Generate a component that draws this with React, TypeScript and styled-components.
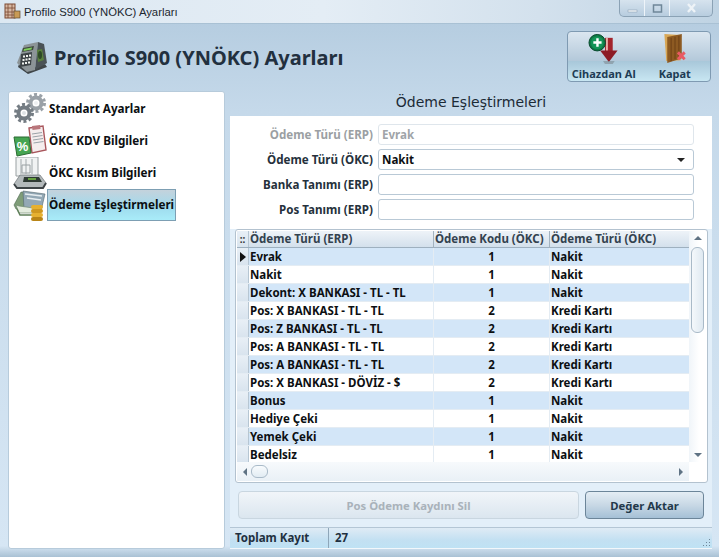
import React from "react";
import styled, { createGlobalStyle } from "styled-components";

const FONT = `"Noto Sans", "DejaVu Sans", sans-serif`;

const GlobalStyle = createGlobalStyle`
  html, body {
    margin: 0;
    padding: 0;
    width: 719px;
    height: 557px;
    overflow: hidden;
    background: #c8dcec;
    font-family: ${FONT};
  }
`;

const Window = styled.div`
  width: 719px;
  height: 557px;
  display: flex;
  flex-direction: column;
  overflow: hidden;
  background: linear-gradient(180deg, #b2cade 0%, #c5d9ea 20%, #d6e6f4 98%, #a9c1d4 100%);
`;
const TitleBar = styled.div`
  height: 24px;
  flex: none;
  display: flex;
  align-items: flex-start;
  padding-left: 4px;
  background: linear-gradient(90deg, #dce8f2 0%, #e4edf5 45%, #d3e1ed 75%, #bfd3e3 100%);
  border-bottom: 1px solid #a9c1d4;
  box-sizing: border-box;
`;
const TitleText = styled.span`
  margin: 4px 0 0 3px;
  font: 11.3px/16px "Liberation Sans", Arial, sans-serif;
  color: #1c2730;
  flex: 1;
`;
const WinControls = styled.div`
  display: flex;
  margin-right: 6px;
  height: 16px;
  border: 1px solid #8ba2b5;
  border-top: 0;
  border-radius: 0 0 5px 5px;
  background: linear-gradient(180deg, #d6e3ee, #b8cddf);
`;
const WinButton = styled.div<{ $w: number }>`
  width: ${(p) => p.$w}px;
  display: flex;
  align-items: center;
  justify-content: center;
  border-right: 1px solid #eef4f9;
  &:last-child { border-right: 0; }
`;
const Header = styled.div`
  height: 64px;
  flex: none;
  display: flex;
  align-items: flex-start;
  padding: 0 8px 0 15px;
`;
const HeaderIcon = styled.div`
  margin-top: 17px;
  height: 34px;
`;
const AppTitle = styled.h1`
  flex: 1;
  margin: 21px 0 0 5px;
  font: bold 20px/26px ${FONT};
  color: #22303f;
  white-space: nowrap;
`;
const Toolbar = styled.div`
  margin-top: 7px;
  width: 144px;
  height: 51px;
  display: flex;
  box-sizing: border-box;
  border: 1px solid #7f9ab2;
  border-radius: 4px;
  background: linear-gradient(180deg, #dbe6f0 0%, #b4c9da 58%, #a9c8da 60%, #c8e6f2 100%);
`;
const ToolButton = styled.div<{ $w: number }>`
  width: ${(p) => p.$w}px;
  display: flex;
  flex-direction: column;
  align-items: center;
  padding-top: 1px;
  font: bold 11px/14px ${FONT};
  color: #1e3d55;
  white-space: nowrap;
  & > span {
    margin-top: 3px;
  }
`;
const Body = styled.div`
  flex: 1;
  display: flex;
  gap: 5px;
  padding: 3px 7px 8px 8px;
  min-height: 0;
`;
const Sidebar = styled.div`
  width: 217px;
  flex: none;
  background: #fff;
  border-radius: 3px;
  border: 1px solid #b7cbdb;
  box-sizing: border-box;
  padding-top: 1px;
`;
const NavRow = styled.div`
  height: 32px;
  display: flex;
  align-items: center;
  padding-left: 4px;
`;
const NavIcon = styled.div`
  width: 34px;
  height: 32px;
  flex: none;
`;
const NavLabel = styled.div<{ $active?: boolean }>`
  height: 32px;
  box-sizing: border-box;
  width: 129px;
  padding-left: 1px;
  font: bold 11.7px/28px ${FONT};
  color: #0c0f12;
  white-space: nowrap;
  border: 1px solid ${(p) => (p.$active ? "#7d9fb3" : "transparent")};
  background: ${(p) => (p.$active ? "linear-gradient(180deg, #c4d2dc 0%, #9fdcee 60%, #a9ecf9 100%)" : "none")};
`;
const Content = styled.div`
  flex: 1;
  display: flex;
  flex-direction: column;
  min-width: 0;
`;
const SectionTitle = styled.div`
  height: 25px;
  flex: none;
  text-align: center;
  font: 14px/23px "DejaVu Sans", sans-serif;
  color: #1b2a36;
`;
const Panel = styled.div`
  flex: 1;
  display: flex;
  flex-direction: column;
  background: #e3eff9;
  min-height: 0;
`;
const Form = styled.div`
  background: #fff;
  padding: 8px 18px 9px 0;
  display: flex;
  flex-direction: column;
  gap: 4px;
`;
const FormRow = styled.div`
  display: flex;
  align-items: flex-start;
  height: 21px;
`;
const FieldLabel = styled.div<{ $off?: boolean }>`
  width: 143px;
  text-align: right;
  font: bold 11.6px/21px ${FONT};
  color: ${(p) => (p.$off ? "#9b9fa3" : "#25313c")};
  white-space: nowrap;
`;
const Field = styled.div<{ $off?: boolean }>`
  margin-left: 5px;
  flex: 1;
  height: 21px;
  box-sizing: border-box;
  padding: 0 8px 0 3px;
  display: flex;
  align-items: center;
  justify-content: space-between;
  background: #fff;
  border: 1px solid ${(p) => (p.$off ? "#dfe6ec" : "#b9c9d6")};
  border-radius: 3px;
  font: bold 11.6px/17px ${FONT};
  color: ${(p) => (p.$off ? "#a0a4a8" : "#0c0f12")};
`;
const Caret = styled.span`
  width: 0;
  height: 0;
  border-left: 4px solid transparent;
  border-right: 4px solid transparent;
  border-top: 4px solid #222;
`;
const GridBox = styled.div`
  margin: 0 4px 0 5px;
  height: 254px;
  flex: none;
  box-sizing: border-box;
  border: 1px solid #b3c2cf;
  border-radius: 3px;
  background: #fff;
  padding: 1px;
  display: grid;
  grid-template-columns: 1fr 17px;
  grid-template-rows: 1fr 19px;
`;
const GridMain = styled.div`
  overflow: hidden;
  min-width: 0;
`;
const GridRow = styled.div<{ $head?: boolean; $alt?: boolean }>`
  height: ${(p) => (p.$head ? "17px" : "18px")};
  display: grid;
  grid-template-columns: 12px 185px 116px 141px;
  box-sizing: border-box;
  background: ${(p) =>
    p.$head ? "linear-gradient(180deg, #eef3f8, #d3e0ec)" : p.$alt ? "#d3e6f8" : "#fff"};
  border-bottom: 1px solid ${(p) => (p.$head ? "#9eb0bf" : "#e4ecf3")};
`;
const RowHead = styled.div`
  display: flex;
  align-items: center;
  justify-content: center;
  box-sizing: border-box;
  background: linear-gradient(180deg, #e8eff6, #d9e4ee);
  border-right: 1px solid #b6c6d3;
  font: bold 10px/14px ${FONT};
  color: #333;
`;
const Cell = styled.div<{ $center?: boolean; $head?: boolean }>`
  padding-left: ${(p) => (p.$center ? "0" : "1px")};
  text-align: ${(p) => (p.$center ? "center" : "left")};
  font: bold 11.5px/${(p) => (p.$head ? "15px" : "18px")} ${FONT};
  color: ${(p) => (p.$head ? "#33424f" : "#0c0f12")};
  border-right: 1px solid ${(p) => (p.$head ? "#a3b3c0" : "#e4ecf3")};
  white-space: nowrap;
  overflow: hidden;
`;
const ArrowRight = styled.span`
  width: 0;
  height: 0;
  border-top: 5px solid transparent;
  border-bottom: 5px solid transparent;
  border-left: 6px solid #111;
`;
const VBar = styled.div`
  background: linear-gradient(90deg, #f0f5f9, #fff 60%);
  display: flex;
  flex-direction: column;
  align-items: center;
  padding: 5px 0 5px;
`;
const HBar = styled.div`
  background: linear-gradient(180deg, #f7fafc, #e9f0f6);
  display: flex;
  align-items: center;
  padding: 0 6px;
  justify-content: space-between;
`;
const Corner = styled.div`
  background: #fff;
`;
const Tri = styled.span<{ $dir: "up" | "down" | "left" | "right" }>`
  width: 0;
  height: 0;
  flex: none;
  ${(p) =>
    p.$dir === "up"
      ? "border-left:4px solid transparent;border-right:4px solid transparent;border-bottom:4px solid #5f7384;"
      : p.$dir === "down"
        ? "border-left:4px solid transparent;border-right:4px solid transparent;border-top:4px solid #5f7384;"
        : p.$dir === "left"
          ? "border-top:4px solid transparent;border-bottom:4px solid transparent;border-right:4px solid #5f7384;"
          : "border-top:4px solid transparent;border-bottom:4px solid transparent;border-left:4px solid #5f7384;"}
`;
const VThumb = styled.div`
  width: 13px;
  height: 86px;
  margin-top: 7px;
  box-sizing: border-box;
  border: 1px solid #a9bac8;
  border-radius: 6px;
  background: linear-gradient(90deg, #f4f8fb, #dfe9f1);
`;
const VTrack = styled.div`
  flex: 1;
`;
const HThumb = styled.div`
  width: 17px;
  height: 13px;
  margin-left: 4px;
  box-sizing: border-box;
  border: 1px solid #a9bac8;
  border-radius: 6px;
  background: linear-gradient(180deg, #f8fbfd, #e2ecf3);
`;
const HTrack = styled.div`
  flex: 1;
`;
const Actions = styled.div`
  display: flex;
  gap: 6px;
  padding: 8px;
  height: 44px;
  box-sizing: border-box;
  flex: none;
`;
const ActionButton = styled.div<{ $off?: boolean; $w: number }>`
  width: ${(p) => p.$w}px;
  height: 28px;
  box-sizing: border-box;
  border-radius: 4px;
  text-align: center;
  font: bold 11.3px/27px ${FONT};
  border: 1px solid ${(p) => (p.$off ? "#c9d6e0" : "#6c8599")};
  color: ${(p) => (p.$off ? "#a9b2ba" : "#22384a")};
  background: ${(p) =>
    p.$off
      ? "linear-gradient(180deg, #f1f5f9, #dbe6ef)"
      : "linear-gradient(180deg, #e4edf4 0%, #c8d8e5 50%, #a5c0d6 100%)"};
`;
const StatusBar = styled.div`
  height: 22px;
  flex: none;
  display: flex;
  position: relative;
  box-sizing: border-box;
  border-top: 1px solid #b4c6d5;
  border-bottom: 1px solid #f2f7fb;
  background: linear-gradient(180deg, #dfebf5 0%, #c3e0f2 60%, #bfe2f4 100%);
  font: bold 11.5px/20px ${FONT};
  color: #1f3040;
`;
const StatusCell = styled.div<{ $w?: number }>`
  width: ${(p) => (p.$w ? `${p.$w}px` : "auto")};
  box-sizing: border-box;
  padding-left: 5px;
  & + & {
    border-left: 1px solid #8ea6b9;
    padding-left: 6px;
  }
`;
const Grip = styled.svg`
  position: absolute;
  right: 1px;
  bottom: 1px;
`;

function TerminalIcon() {
  return (
    <svg width="34" height="34" viewBox="0 0 34 34">
      <path d="M3 26l10 7 19-7-2-3-17 6-9-6Z" fill="#3f4548" />
      <path d="M2 22L9 4l14-3-3 28-8 2Z" fill="#8c9497" />
      <path d="M20 29L23 1l6 2 3 19Z" fill="#4a5256" />
      <path d="M8 7l11-2-1 4-11 2Z" fill="#3f4a3c" />
      <path d="M9 8l8-1.500-.5 2-8 1.500Z" fill="#7fcf5e" />
      <path d="M6 13l11-2-1 13-11 2Z" fill="#3c4245" />
      <path d="M8 14.500h2v2H8ZM11 14h2v2h-2ZM14 13.500h2v2h-2ZM7.500 18h2v2h-2ZM10.500 17.500h2v2h-2ZM13.500 17h2v2h-2ZM7 21.500h2v2H7ZM10 21h2v2h-2ZM13 20.500h2v2h-2Z" fill="#eef1ee" />
      <path d="M22 9l5-1 2 11-6 2Z" fill="#59803e" />
      <ellipse cx="25" cy="14" rx="2" ry="4" fill="#2e4a26" />
    </svg>
  );
}

function TitleIcon() {
  return (
    <svg width="17" height="17" viewBox="0 0 17 17" style={{ marginTop: 3 }}>
      <rect x="1" y="1" width="10" height="14" fill="#d8b9a4" stroke="#7c4a33" />
      <path d="M1 5h10M1 9h10M1 12h10M4 1v14M8 1v14" stroke="#7c4a33" strokeWidth=".8" />
      <rect x="10" y="8" width="6" height="7" fill="#c89a55" stroke="#5e4a32" strokeWidth=".7" />
    </svg>
  );
}

function PullIcon() {
  return (
    <svg width="38" height="32" viewBox="0 0 38 32">
      <rect x="20" y="5" width="8" height="17" fill="#a3242c" />
      <rect x="21" y="5" width="2" height="17" fill="#e9b0a8" />
      <path d="M15 18h18l-9 12Z" fill="#8d1b25" />
      <path d="M18 29h12l-2 3H20Z" fill="#7f8a92" opacity=".6" />
      <circle cx="12" cy="10" r="8.500" fill="#0f7a45" stroke="#06462a" />
      <circle cx="12" cy="10" r="6.500" fill="#149457" />
      <path d="M8 8.500h3v-3h2.500v3h3v2.600h-3v3H11v-3H8Z" fill="#fff" />
    </svg>
  );
}

function DoorIcon() {
  return (
    <svg width="26" height="32" viewBox="0 0 26 32">
      <path d="M2 1l16 1 1 26-15 1Z" fill="#d8a655" />
      <path d="M5 4l15-3v25L5 31Z" fill="#8d5a22" />
      <path d="M9 5v24M13 4v23M17 3v23" stroke="#6c4016" strokeWidth="1" />
      <path d="M16 20l7 7M23 20l-7 7" stroke="#e95a62" strokeWidth="3" />
    </svg>
  );
}

function GearsIcon() {
  return (
    <svg width="34" height="32" viewBox="0 0 34 32">
      <g fill="none" stroke="#9aa1a7">
        <circle cx="23" cy="10" r="5.500" strokeWidth="4" />
        <circle cx="23" cy="10" r="8.500" strokeWidth="3" strokeDasharray="3 2.400" />
      </g>
      <g fill="none" stroke="#747c83">
        <circle cx="11" cy="20" r="5.500" strokeWidth="4" />
        <circle cx="11" cy="20" r="8.500" strokeWidth="3" strokeDasharray="3 2.400" />
      </g>
      <circle cx="11" cy="20" r="2" fill="#dfe3e6" />
      <circle cx="23" cy="10" r="2" fill="#eef0f2" />
    </svg>
  );
}

function PercentIcon() {
  return (
    <svg width="34" height="32" viewBox="0 0 34 32">
      <path d="M16 3l14-2 3 24-14 3Z" fill="#f5eded" stroke="#a9565c" strokeWidth="1.400" />
      <path d="M19 1l8-1 .5 4-8 1Z" fill="#b9777c" />
      <path d="M19 9l10-1.500M19.500 12l10-1.500M20 15l10-1.500M20.500 18l10-1.500" stroke="#9aa3a8" />
      <path d="M1 12l15 0 2 16-14 3Z" fill="#46a552" stroke="#2a6b33" />
      <text x="9.500" y="26" textAnchor="middle" fontSize="13" fontWeight="bold" fill="#fff" fontFamily="Liberation Sans">%</text>
    </svg>
  );
}

function ScaleIcon() {
  return (
    <svg width="34" height="32" viewBox="0 0 34 32">
      <path d="M3 0h22v19H3Z" fill="#f1f3f3" stroke="#9aa1a3" />
      <path d="M8 2v15M13 2v15M19 2v15" stroke="#bcc2c4" strokeWidth="1.500" />
      <path d="M9 8h8v8H9Z" fill="none" stroke="#9aa1a3" />
      <path d="M1 27l6-9h20l6 8-3 5H4Z" fill="#b3b9bb" stroke="#5e6568" strokeWidth=".6" />
      <path d="M11 20h15l3 5H10Z" fill="#2e3a33" />
      <rect x="15" y="21" width="8" height="2" fill="#66a040" />
      <path d="M1 27l3 4h26l3-5" fill="none" stroke="#3d4346" strokeWidth="2" />
    </svg>
  );
}

function MoneyIcon() {
  return (
    <svg width="34" height="32" viewBox="0 0 34 32">
      <path d="M1 16L8 3l9 1-6 16H3Z" fill="#7f9d78" stroke="#4d6a50" strokeWidth=".6" />
      <path d="M10 2l22 3-4 17-17-2Z" fill="#93a8b5" stroke="#54686f" strokeWidth=".6" />
      <path d="M12 5l17 2M14 9l14 2" stroke="#e6edf0" strokeWidth="1.500" />
      <path d="M3 16l3 8h14v-5L6 17Z" fill="#e4ecdf" stroke="#6a8569" strokeWidth=".6" />
      <path d="M4 20l3 6h14" fill="none" stroke="#5f7f5a" strokeWidth="1.500" />
      <rect x="18" y="16" width="12" height="4" rx="2" fill="#e6b030" />
      <rect x="18" y="20" width="12" height="4" rx="2" fill="#cf9820" />
      <rect x="18" y="24" width="12" height="4" rx="2" fill="#e6b030" />
      <rect x="18" y="28" width="12" height="4" rx="2" fill="#b98517" />
    </svg>
  );
}

const NAV = [
  { label: "Standart Ayarlar", icon: <GearsIcon /> },
  { label: "ÖKC KDV Bilgileri", icon: <PercentIcon /> },
  { label: "ÖKC Kısım Bilgileri", icon: <ScaleIcon /> },
  { label: "Ödeme Eşleştirmeleri", icon: <MoneyIcon />, active: true },
];

const ROWS: [string, number, string][] = [
  ["Evrak", 1, "Nakit"],
  ["Nakit", 1, "Nakit"],
  ["Dekont: X BANKASI - TL - TL", 1, "Nakit"],
  ["Pos: X BANKASI - TL - TL", 2, "Kredi Kartı"],
  ["Pos: Z BANKASI - TL - TL", 2, "Kredi Kartı"],
  ["Pos: A BANKASI - TL - TL", 2, "Kredi Kartı"],
  ["Pos: A BANKASI - TL - TL", 2, "Kredi Kartı"],
  ["Pos: X BANKASI - DÖVİZ - $", 2, "Kredi Kartı"],
  ["Bonus", 1, "Nakit"],
  ["Hediye Çeki", 1, "Nakit"],
  ["Yemek Çeki", 1, "Nakit"],
  ["Bedelsiz", 1, "Nakit"],
];

export default function App() {
  return (
    <Window>
      <GlobalStyle />
      <TitleBar>
        <TitleIcon />
        <TitleText>Profilo S900 (YNÖKC) Ayarları</TitleText>
        <WinControls>
          <WinButton $w={24}>
            <svg width="11" height="9"><rect x="1" y="6" width="9" height="2" fill="#f2f6f9" stroke="#8299ab" strokeWidth=".5" /></svg>
          </WinButton>
          <WinButton $w={24}>
            <svg width="11" height="9"><rect x="1.500" y="1" width="8" height="7" fill="none" stroke="#6f8799" strokeWidth="1.500" /></svg>
          </WinButton>
          <WinButton $w={42}>
            <svg width="11" height="10"><path d="M2 1l7 8M9 1l-7 8" stroke="#eef3f7" strokeWidth="2.400" /></svg>
          </WinButton>
        </WinControls>
      </TitleBar>
      <Header>
        <HeaderIcon><TerminalIcon /></HeaderIcon>
        <AppTitle>Profilo S900 (YNÖKC) Ayarları</AppTitle>
        <Toolbar>
          <ToolButton $w={72}>
            <PullIcon />
            <span>Cihazdan Al</span>
          </ToolButton>
          <ToolButton $w={71}>
            <DoorIcon />
            <span>Kapat</span>
          </ToolButton>
        </Toolbar>
      </Header>
      <Body>
        <Sidebar>
          {NAV.map((n) => (
            <NavRow key={n.label}>
              <NavIcon>{n.icon}</NavIcon>
              <NavLabel $active={n.active}>{n.label}</NavLabel>
            </NavRow>
          ))}
        </Sidebar>
        <Content>
          <SectionTitle>Ödeme Eşleştirmeleri</SectionTitle>
          <Panel>
            <Form>
              <FormRow>
                <FieldLabel $off>Ödeme Türü (ERP)</FieldLabel>
                <Field $off>Evrak</Field>
              </FormRow>
              <FormRow>
                <FieldLabel>Ödeme Türü (ÖKC)</FieldLabel>
                <Field>Nakit<Caret /></Field>
              </FormRow>
              <FormRow>
                <FieldLabel>Banka Tanımı (ERP)</FieldLabel>
                <Field />
              </FormRow>
              <FormRow>
                <FieldLabel>Pos Tanımı (ERP)</FieldLabel>
                <Field />
              </FormRow>
            </Form>
            <GridBox>
              <GridMain>
                <GridRow $head>
                  <RowHead>::</RowHead>
                  <Cell $head>Ödeme Türü (ERP)</Cell>
                  <Cell $head>Ödeme Kodu (ÖKC)</Cell>
                  <Cell $head>Ödeme Türü (ÖKC)</Cell>
                </GridRow>
                {ROWS.map((r, i) => (
                  <GridRow key={i} $alt={i % 2 === 0}>
                    <RowHead>{i === 0 && <ArrowRight />}</RowHead>
                    <Cell>{r[0]}</Cell>
                    <Cell $center>{r[1]}</Cell>
                    <Cell>{r[2]}</Cell>
                  </GridRow>
                ))}
              </GridMain>
              <VBar>
                <Tri $dir="up" />
                <VThumb />
                <VTrack />
                <Tri $dir="down" />
              </VBar>
              <HBar>
                <Tri $dir="left" />
                <HThumb />
                <HTrack />
                <Tri $dir="right" />
              </HBar>
              <Corner />
            </GridBox>
            <Actions>
              <ActionButton $off $w={341}>Pos Ödeme Kaydını Sil</ActionButton>
              <ActionButton $w={119}>Değer Aktar</ActionButton>
            </Actions>
            <StatusBar>
              <StatusCell $w={98}>Toplam Kayıt</StatusCell>
              <StatusCell>27</StatusCell>
              <Grip width="9" height="9" viewBox="0 0 9 9">
                <path d="M7 1h1v1H7ZM4 4h1v1H4ZM7 4h1v1H7ZM1 7h1v1H1ZM4 7h1v1H4ZM7 7h1v1H7Z" fill="#6f8799" />
              </Grip>
            </StatusBar>
          </Panel>
        </Content>
      </Body>
    </Window>
  );
}
